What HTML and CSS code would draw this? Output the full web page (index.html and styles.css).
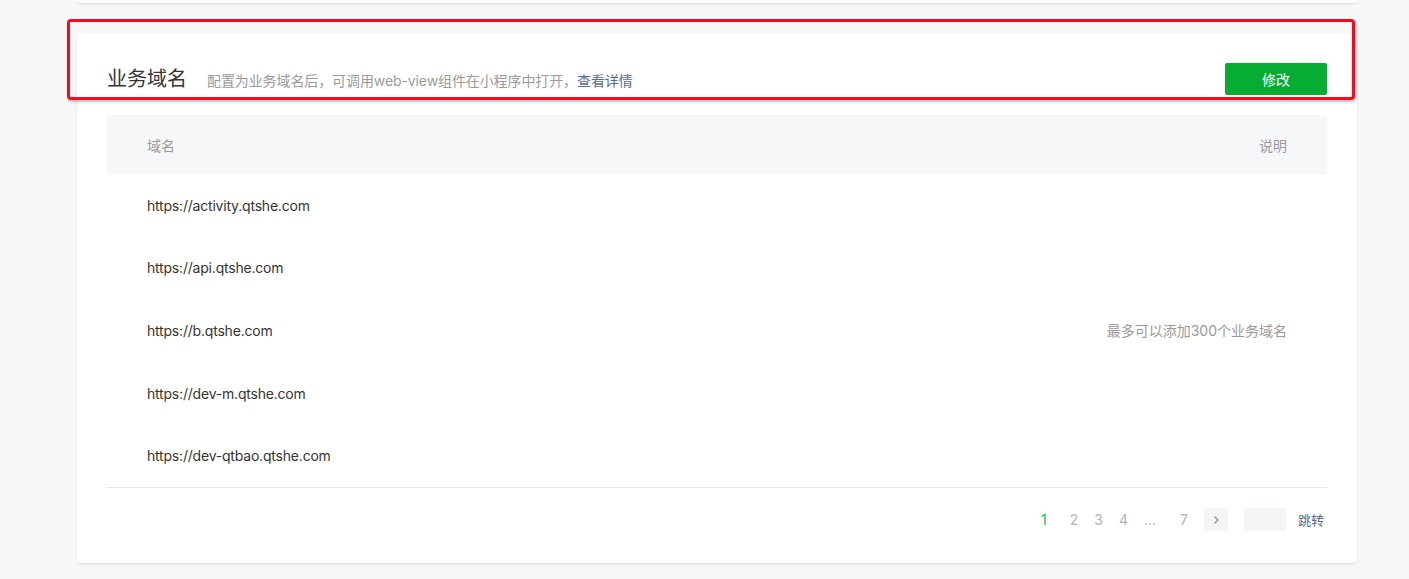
FILE: index.html
```html
<!DOCTYPE html>
<html lang="zh-CN">
<head>
<meta charset="utf-8">
<title>业务域名</title>
<link rel="stylesheet" href="styles.css">
</head>
<body>
<div class="page">
  <div class="card card-top"></div>
  <div class="card card-main">
    <div class="section-head">
      <div class="head-left">
        <h2 class="title">业务域名</h2>
        <p class="desc">配置为业务域名后，可调用web-view组件在小程序中打开，<a class="link" href="#">查看详情</a></p>
      </div>
      <button class="btn-primary" type="button">修改</button>
    </div>
    <div class="table">
      <div class="thead">
        <span class="th">域名</span>
        <span class="th">说明</span>
      </div>
      <div class="tbody">
        <div class="td url">https://activity.qtshe.com</div>
        <div class="td note">最多可以添加300个业务域名</div>
        <div class="td url">https://api.qtshe.com</div>
        <div class="td url">https://b.qtshe.com</div>
        <div class="td url">https://dev-m.qtshe.com</div>
        <div class="td url">https://dev-qtbao.qtshe.com</div>
      </div>
    </div>
    <div class="pager">
      <span class="pg active">1</span>
      <span class="pg second">2</span>
      <span class="pg">3</span>
      <span class="pg">4</span>
      <span class="pg ellipsis">...</span>
      <span class="pg">7</span>
      <span class="pg-next"><svg width="8" height="10" viewBox="0 0 8 10"><path d="M2.5 1.5 L6 5 L2.5 8.5" fill="none" stroke="#8a8a8a" stroke-width="1.2"/></svg></span>
      <span class="pg-input"></span>
      <a class="pg-jump" href="#">跳转</a>
    </div>
  </div>
  <div class="highlight"></div>
</div>
</body>
</html>
```
FILE: styles.css
```css
* { box-sizing: border-box; }
html, body { margin: 0; padding: 0; }
body {
  background: #f6f7f9;
  font-family: Inter, "Noto Sans CJK SC", sans-serif;
  font-size: 14px;
  color: #353535;
  height: 579px;
  overflow: hidden;
}
.page {
  position: relative;
  width: 1280px;
  margin-left: 77px;
}
.card {
  background: #fff;
  box-shadow: 0 1px 2px rgba(0, 0, 0, 0.12);
  border-radius: 0 0 4px 4px;
}
.card-top {
  height: 3px;
}
.card-main {
  margin-top: 30px;
  border-radius: 4px;
  padding: 30px 30px 31px;
}
.section-head {
  display: flex;
  justify-content: space-between;
  align-items: flex-end;
  height: 32px;
}
.head-left {
  display: flex;
  align-items: baseline;
  padding-bottom: 2px;
}
.title {
  margin: 0;
  font-size: 20px;
  font-weight: 400;
  line-height: 28px;
  color: #353535;
}
.desc {
  margin: 0 0 0 20px;
  font-size: 14px;
  color: #9a9a9a;
  letter-spacing: -0.1px;
}
.link {
  color: #576b95;
  text-decoration: none;
}
.btn-primary {
  width: 102px;
  height: 32px;
  border: 0;
  border-radius: 2px;
  background: #07ad32;
  color: #fff;
  font-family: inherit;
  font-size: 14px;
  padding: 0;
}
.table {
  margin-top: 20px;
  border-bottom: 1px solid #e7e7e7;
}
.thead {
  display: flex;
  justify-content: space-between;
  align-items: center;
  height: 59px;
  padding: 0 40px;
  background: #f6f7f9;
  color: #9a9a9a;
}
.tbody {
  display: grid;
  grid-template-columns: 1fr auto;
  grid-auto-rows: 62.6px;
  padding: 0 40px;
}
.td {
  display: flex;
  align-items: center;
}
.url {
  grid-column: 1;
  letter-spacing: -0.2px;
}
.note {
  grid-column: 2;
  grid-row: 1 / span 5;
  color: #9a9a9a;
  justify-content: flex-end;
}
.pager {
  display: flex;
  justify-content: flex-end;
  align-items: center;
  height: 24px;
  margin-top: 20px;
  padding-right: 3px;
  color: #b2b2b2;
}
.pg {
  margin-left: 16px;
  line-height: 24px;
}
.pg.active { color: #07c160; }
.pg.second { margin-left: 23px; }
.pg.ellipsis { margin-left: 16px; margin-right: 8px; }
.pg-next {
  display: flex;
  align-items: center;
  justify-content: center;
  width: 24px;
  height: 23px;
  margin-left: 16px;
  background: #f4f5f7;
  border-radius: 2px;
}
.pg-input {
  width: 42px;
  height: 23px;
  margin-left: 16px;
  background: #f4f5f7;
  border-radius: 2px;
}
.pg-jump {
  margin-left: 12px;
  font-size: 13px;
  color: #576b95;
  text-decoration: none;
}
.highlight {
  position: absolute;
  left: -10px;
  top: 19px;
  width: 1288px;
  height: 81px;
  border: 3px solid #f8081f;
  border-radius: 4px;
  box-shadow: 1px 2px 3px rgba(0, 0, 0, 0.25);
  pointer-events: none;
}
```
